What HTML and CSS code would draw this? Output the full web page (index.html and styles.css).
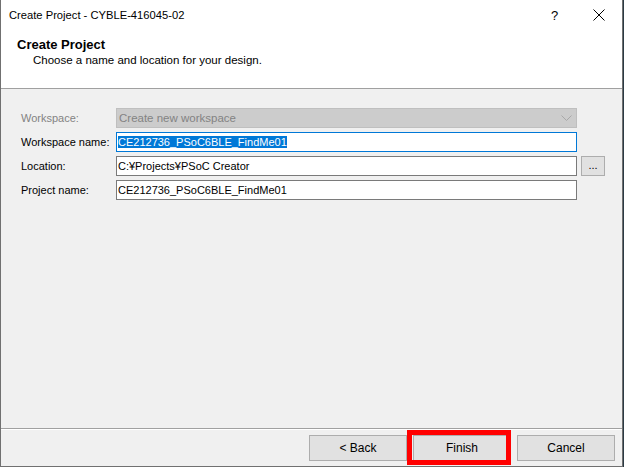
FILE: index.html
```html
<!DOCTYPE html>
<html>
<head>
<meta charset="utf-8">
<link rel="stylesheet" href="styles.css">
</head>
<body>
<div class="window">
  <div class="titlebar">
    <span class="title">Create Project - CYBLE-416045-02</span>
    <span class="help">?</span>
    <span class="close"><svg width="12" height="12" viewBox="0 0 12 12"><path d="M0.5 0.5L11.5 11.5M11.5 0.5L0.5 11.5" stroke="#000" stroke-width="1" fill="none"/></svg></span>
  </div>
  <div class="header">
    <div class="h-title">Create Project</div>
    <div class="h-sub">Choose a name and location for your design.</div>
  </div>
  <div class="main">
    <div class="form">
      <label class="lbl disabled">Workspace:</label>
      <div class="combo"><span>Create new workspace</span><svg width="11" height="6" viewBox="0 0 11 6"><path d="M0.5 0.5L5.5 5.5L10.5 0.5" stroke="#a8a8a8" fill="none"/></svg></div>
      <div></div>
      <label class="lbl">Workspace name:</label>
      <div class="input focus"><span class="sel">CE212736_PSoC6BLE_FindMe01</span></div>
      <div></div>
      <label class="lbl">Location:</label>
      <div class="input">C:¥Projects¥PSoC Creator</div>
      <div class="browse">...</div>
      <label class="lbl">Project name:</label>
      <div class="input">CE212736_PSoC6BLE_FindMe01</div>
      <div></div>
    </div>
  </div>
  <div class="footer">
    <div class="btn">&lt; Back</div>
    <div class="btn">Finish</div>
    <div class="btn">Cancel</div>
    <div class="highlight"></div>
  </div>
</div>
</body>
</html>
```
FILE: styles.css
```css
html, body { margin: 0; padding: 0; }
body {
  background: #2b3a44;
  font-family: "Liberation Sans", Arial, sans-serif;
  font-size: 11.5px;
  color: #000;
}
.window {
  width: 621px;
  height: 466px;
  border-left: 1px solid #707070;
  border-right: 1px solid #707070;
  border-bottom: 1px solid #707070;
  background: #f0f0f0;
  display: flex;
  flex-direction: column;
  box-sizing: content-box;
}
.titlebar {
  height: 30px;
  background: #fff;
  display: flex;
  align-items: center;
  padding-left: 8px;
}
.title { flex: 1; font-size: 11.2px; line-height: 30px; }
.help { width: 12px; font-size: 13px; margin-right: 30px; }
.close { width: 12px; height: 12px; margin-right: 17px; display: flex; }
.header {
  height: 59px;
  background: #fff;
  border-bottom: 1px solid #a0a0a0;
  padding-left: 16px;
  padding-top: 7px;
  box-sizing: border-box;
}
.h-title { font-weight: bold; font-size: 13px; line-height: 16px; }
.h-sub { padding-left: 16px; line-height: 15px; font-size: 11.5px; }
.main {
  flex: 1;
  padding: 19px 0 0 20px;
  border-bottom: 1px solid #a0a0a0;
}
.form {
  display: grid;
  grid-template-columns: 91px 461px 24px;
  column-gap: 4px;
  row-gap: 4px;
  grid-auto-rows: 20px;
  font-size: 11px;
}
.lbl { line-height: 20px; white-space: nowrap; }
.lbl.disabled { color: #838383; }
.combo {
  background: #cccccc;
  border: 1px solid #bfbfbf;
  color: #838383;
  display: flex;
  align-items: center;
  justify-content: space-between;
  padding: 0 4px 0 2px;
  font-size: 11.5px;
}
.input {
  background: #fff;
  border: 1px solid #7a7a7a;
  line-height: 18px;
  padding-left: 1px;
  white-space: nowrap;
  overflow: hidden;
}
.input.focus { border-color: #0078d7; }
.sel { background: #0078d7; color: #fff; }
.browse {
  background: #e1e1e1;
  border: 1px solid #adadad;
  text-align: center;
  line-height: 16px;
}
.footer {
  height: 37px;
  border-top: 1px solid #fff;
  display: flex;
  justify-content: flex-end;
  gap: 6px;
  padding: 5px 7px 0 0;
  box-sizing: border-box;
  position: relative;
  font-size: 12px;
}
.btn {
  width: 96px;
  height: 24px;
  background: #e1e1e1;
  border: 1px solid #adadad;
  text-align: center;
  line-height: 24px;
}
.highlight {
  position: absolute;
  left: 406px;
  top: 0px;
  width: 94px;
  height: 25px;
  border: 5px solid #ff0000;
}
```
